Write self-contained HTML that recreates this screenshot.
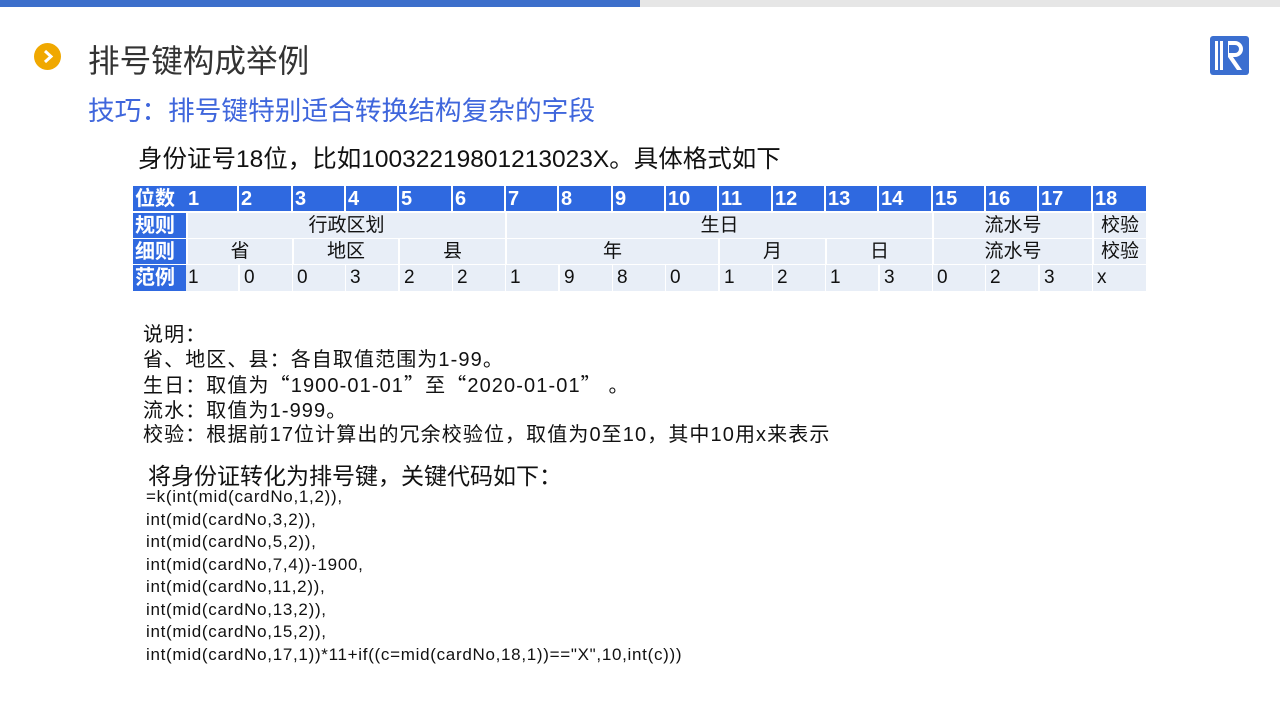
<!DOCTYPE html>
<html><head><meta charset="utf-8"><style>
body{margin:0;width:1280px;height:720px;position:relative;background:#fff;font-family:"Liberation Sans","Noto Sans CJK SC",sans-serif;overflow:hidden}
.a{position:absolute;white-space:nowrap}
.h{position:absolute;background:#2F69E0;color:#fff;font-weight:bold;font-size:20px;height:25px;line-height:26px;padding-left:2px;box-sizing:border-box}
.l{position:absolute;background:#E8EEF7;color:#111;font-size:19px;height:25px;line-height:25px;box-sizing:border-box;text-align:center}
.n{text-align:left;padding-left:4px}
.code{font-size:17px;letter-spacing:0.7px;color:#111;line-height:22.5px}
.q{font-family:"Noto Sans CJK SC",sans-serif}
</style></head><body>
<div class="a" style="left:0;top:0;width:640px;height:7px;background:#3C6FCB"></div>
<div class="a" style="left:640px;top:0;width:640px;height:7px;background:#E6E6E6"></div>
<div class="a" style="left:34px;top:43px;width:27px;height:27px;border-radius:50%;background:#F0A800"></div>
<svg class="a" style="left:34px;top:43px" width="27" height="27"><path d="M11 8l6 5.5-6 5.5" stroke="#fff" stroke-width="3" fill="none"/></svg>
<div class="a" style="left:88px;top:36px;font-size:31.6px;color:#333">排号键构成举例</div>
<div class="a" style="left:88px;top:89px;font-size:26.7px;color:#3F66DC">技巧：排号键特别适合转换结构复杂的字段</div>
<svg class="a" style="left:1210px;top:36px" width="39" height="39"><rect width="39" height="39" rx="3" fill="#3B6FD0"/><rect x="5" y="5" width="3" height="29" fill="#fff"/><rect x="10" y="5" width="3" height="29" fill="#fff"/><path d="M15 5h10a8 8 0 0 1 0 16h-2l9 13h-5l-9-13V5z M19 9v8h6a4 4 0 0 0 0-8z" fill="#fff" fill-rule="evenodd"/></svg>
<div class="a" style="left:138px;top:140px;font-size:24.5px;color:#111">身份证号18位，比如10032219801213023X。具体格式如下</div>

<div class="h" style="left:133px;top:186px;width:53px">位数</div>
<div class="h" style="left:186px;top:186px;width:51px">1</div>
<div class="h" style="left:239px;top:186px;width:52px">2</div>
<div class="h" style="left:293px;top:186px;width:51px">3</div>
<div class="h" style="left:346px;top:186px;width:51px">4</div>
<div class="h" style="left:399px;top:186px;width:52px">5</div>
<div class="h" style="left:453px;top:186px;width:51px">6</div>
<div class="h" style="left:506px;top:186px;width:51px">7</div>
<div class="h" style="left:559px;top:186px;width:52px">8</div>
<div class="h" style="left:613px;top:186px;width:51px">9</div>
<div class="h" style="left:666px;top:186px;width:51px">10</div>
<div class="h" style="left:719px;top:186px;width:52px">11</div>
<div class="h" style="left:773px;top:186px;width:51px">12</div>
<div class="h" style="left:826px;top:186px;width:51px">13</div>
<div class="h" style="left:879px;top:186px;width:52px">14</div>
<div class="h" style="left:933px;top:186px;width:51px">15</div>
<div class="h" style="left:986px;top:186px;width:51px">16</div>
<div class="h" style="left:1039px;top:186px;width:52px">17</div>
<div class="h" style="left:1093px;top:186px;width:53px">18</div>

<div class="h" style="left:133px;top:213px;width:53px">规则</div>
<div class="h" style="left:133px;top:239px;width:53px">细则</div>
<div class="h" style="left:133px;top:265px;width:53px;height:26px">范例</div>

<div class="l" style="left:188px;top:213px;width:317px">行政区划</div>
<div class="l" style="left:507px;top:213px;width:425px">生日</div>
<div class="l" style="left:934px;top:213px;width:158px">流水号</div>
<div class="l" style="left:1094px;top:213px;width:52px">校验</div>
<div class="l" style="left:188px;top:239px;width:104px">省</div>
<div class="l" style="left:294px;top:239px;width:104px">地区</div>
<div class="l" style="left:400px;top:239px;width:105px">县</div>
<div class="l" style="left:507px;top:239px;width:211px">年</div>
<div class="l" style="left:720px;top:239px;width:105px">月</div>
<div class="l" style="left:827px;top:239px;width:105px">日</div>
<div class="l" style="left:934px;top:239px;width:158px">流水号</div>
<div class="l" style="left:1094px;top:239px;width:52px">校验</div>
<div class="l n" style="left:186px;top:265px;width:52px;height:26px;padding-left:2px">1</div>
<div class="l n" style="left:240px;top:265px;width:52px;height:26px">0</div>
<div class="l n" style="left:293px;top:265px;width:52px;height:26px">0</div>
<div class="l n" style="left:346px;top:265px;width:52px;height:26px">3</div>
<div class="l n" style="left:400px;top:265px;width:52px;height:26px">2</div>
<div class="l n" style="left:453px;top:265px;width:52px;height:26px">2</div>
<div class="l n" style="left:506px;top:265px;width:52px;height:26px">1</div>
<div class="l n" style="left:560px;top:265px;width:52px;height:26px">9</div>
<div class="l n" style="left:613px;top:265px;width:52px;height:26px">8</div>
<div class="l n" style="left:666px;top:265px;width:52px;height:26px">0</div>
<div class="l n" style="left:720px;top:265px;width:52px;height:26px">1</div>
<div class="l n" style="left:773px;top:265px;width:52px;height:26px">2</div>
<div class="l n" style="left:826px;top:265px;width:52px;height:26px">1</div>
<div class="l n" style="left:880px;top:265px;width:52px;height:26px">3</div>
<div class="l n" style="left:933px;top:265px;width:52px;height:26px">0</div>
<div class="l n" style="left:986px;top:265px;width:52px;height:26px">2</div>
<div class="l n" style="left:1040px;top:265px;width:52px;height:26px">3</div>
<div class="l n" style="left:1093px;top:265px;width:53px;height:26px">x</div>

<div class="a" style="left:143px;top:323px;font-size:20px;letter-spacing:1.1px;line-height:24.5px;color:#111">说明：<br>省、地区、县：各自取值范围为1-99。<br>生日：取值为<span class="q">“</span>1900-01-01<span class="q">”</span>至<span class="q">“</span>2020-01-01<span class="q">”</span> 。<br>流水：取值为1-999。<br>校验：根据前17位计算出的冗余校验位，取值为0至10，其中10用x来表示</div>
<div class="a" style="left:148px;top:457px;font-size:23px;color:#111">将身份证转化为排号键，关键代码如下：</div>
<div class="a code" style="left:146px;top:486px">=k(int(mid(cardNo,1,2)),<br>int(mid(cardNo,3,2)),<br>int(mid(cardNo,5,2)),<br>int(mid(cardNo,7,4))-1900,<br>int(mid(cardNo,11,2)),<br>int(mid(cardNo,13,2)),<br>int(mid(cardNo,15,2)),<br>int(mid(cardNo,17,1))*11+if((c=mid(cardNo,18,1))=="X",10,int(c)))</div>
</body></html>
